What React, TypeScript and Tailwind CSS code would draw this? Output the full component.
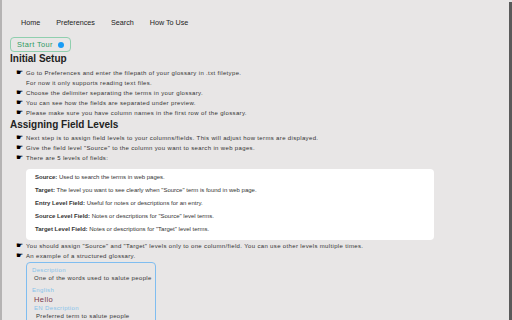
import React from "react";

const Bullet = ({ children }: { children: React.ReactNode }) => (
  <div className="flex items-center h-[10px]">
    <span className="w-[10px] ml-[6px] text-[8px] leading-none text-black" style={{ fontFamily: '"DejaVu Sans", sans-serif' }}>☛</span>
    <span className="text-[6px] tracking-[0.35px] text-[#333]">{children}</span>
  </div>
);

const Field = ({ name, text }: { name: string; text: string }) => (
  <div className="h-[13px] flex items-center text-[6px] text-[#333]">
    <span className="font-bold">{name}:</span>
    <span>&nbsp;{text}</span>
  </div>
);

export default function App() {
  return (
    <div
      className="w-[512px] h-[320px] overflow-hidden bg-[#e8e6e6] flex"
      style={{ fontFamily: '"Liberation Sans", Arial, sans-serif' }}
    >
      <div className="w-[2px] h-full bg-[#b5b3b3]" />
      <div className="flex-1 flex flex-col">
        <div className="h-[2px] bg-[#e2e2e2]" />
        <div className="flex-1 pl-[8px] flex flex-col">
          <div className="flex gap-[16px] pl-[11px] pt-[18px] h-[37px] text-[7.2px] text-[#222]">
            <span>Home</span>
            <span>Preferences</span>
            <span>Search</span>
            <span>How To Use</span>
          </div>
          <div className="flex">
            <div className="flex items-center gap-[5px] h-[15px] pl-[6px] pr-[6px] border border-[#8fcfae] rounded-[4px] text-[7.4px] tracking-[0.4px] text-[#2f9a63]">
              <span>Start Tour</span>
              <span className="w-[6px] h-[6px] rounded-full bg-[#1a9cf5]" />
            </div>
          </div>
          <div className="text-[10px] font-bold leading-[14px] h-[14px] text-[#222]">Initial Setup</div>
          <div className="mt-[2px]">
            <Bullet>Go to Preferences and enter the filepath of your glossary in .txt filetype.</Bullet>
            <div className="h-[10px] flex items-center pl-[16px] text-[6px] tracking-[0.35px] text-[#333]">For now it only supports reading text files.</div>
            <Bullet>Choose the delimiter separating the terms in your glossary.</Bullet>
            <Bullet>You can see how the fields are separated under preview.</Bullet>
            <Bullet>Please make sure you have column names in the first row of the glossary.</Bullet>
          </div>
          <div className="text-[10px] font-bold leading-[14px] h-[14px] text-[#222]">Assigning Field Levels</div>
          <div className="mt-[1px]">
            <Bullet>Next step is to assign field levels to your columns/fields. This will adjust how terms are displayed.</Bullet>
            <Bullet>Give the field level "Source" to the column you want to search in web pages.</Bullet>
            <Bullet>There are 5 levels of fields:</Bullet>
          </div>
          <div className="ml-[16px] mt-[6px] w-[408px] bg-white rounded-[4px] pl-[9px] pt-[2px] pb-[4px]">
            <Field name="Source" text="Used to search the terms in web pages." />
            <Field name="Target" text={'The level you want to see clearly when "Source" term is found in web page.'} />
            <Field name="Entry Level Field" text="Useful for notes or descriptions for an entry." />
            <Field name="Source Level Field" text={'Notes or descriptions for "Source" level terms.'} />
            <Field name="Target Level Field" text={'Notes or descriptions for "Target" level terms.'} />
          </div>
          <div className="mt-[1px]">
            <Bullet>You should assign "Source" and "Target" levels only to one column/field. You can use other levels multiple times.</Bullet>
            <Bullet>An example of a structured glossary.</Bullet>
          </div>
          <div className="ml-[16px] mt-[1px] w-[130px] h-[70px] border border-[#7fbdf0] rounded-[4px] pl-[5px] pt-[3px] tracking-[0.35px]">
            <div className="text-[6px] text-[#86c3ea] h-[8px] leading-[8px]">Description</div>
            <div className="text-[6px] text-[#333] h-[9px] leading-[9px] pl-[2px]">One of the words used to salute people</div>
            <div className="text-[6px] text-[#86c3ea] h-[9px] leading-[9px] mt-[3px]">English</div>
            <div className="text-[7.6px] text-[#7a3a4a] h-[9px] leading-[9px] pl-[2px]">Hello</div>
            <div className="text-[6px] text-[#86c3ea] h-[8px] leading-[8px] pl-[2px]">EN Description</div>
            <div className="text-[6px] text-[#333] h-[9px] leading-[9px] pl-[4px]">Preferred term to salute people</div>
          </div>
        </div>
      </div>
      <div className="w-[3px] h-full flex flex-col">
        <div className="h-[2px] bg-[#e2e2e2]" />
        <div className="flex-1 bg-[#5a5a5a]" />
      </div>
    </div>
  );
}
